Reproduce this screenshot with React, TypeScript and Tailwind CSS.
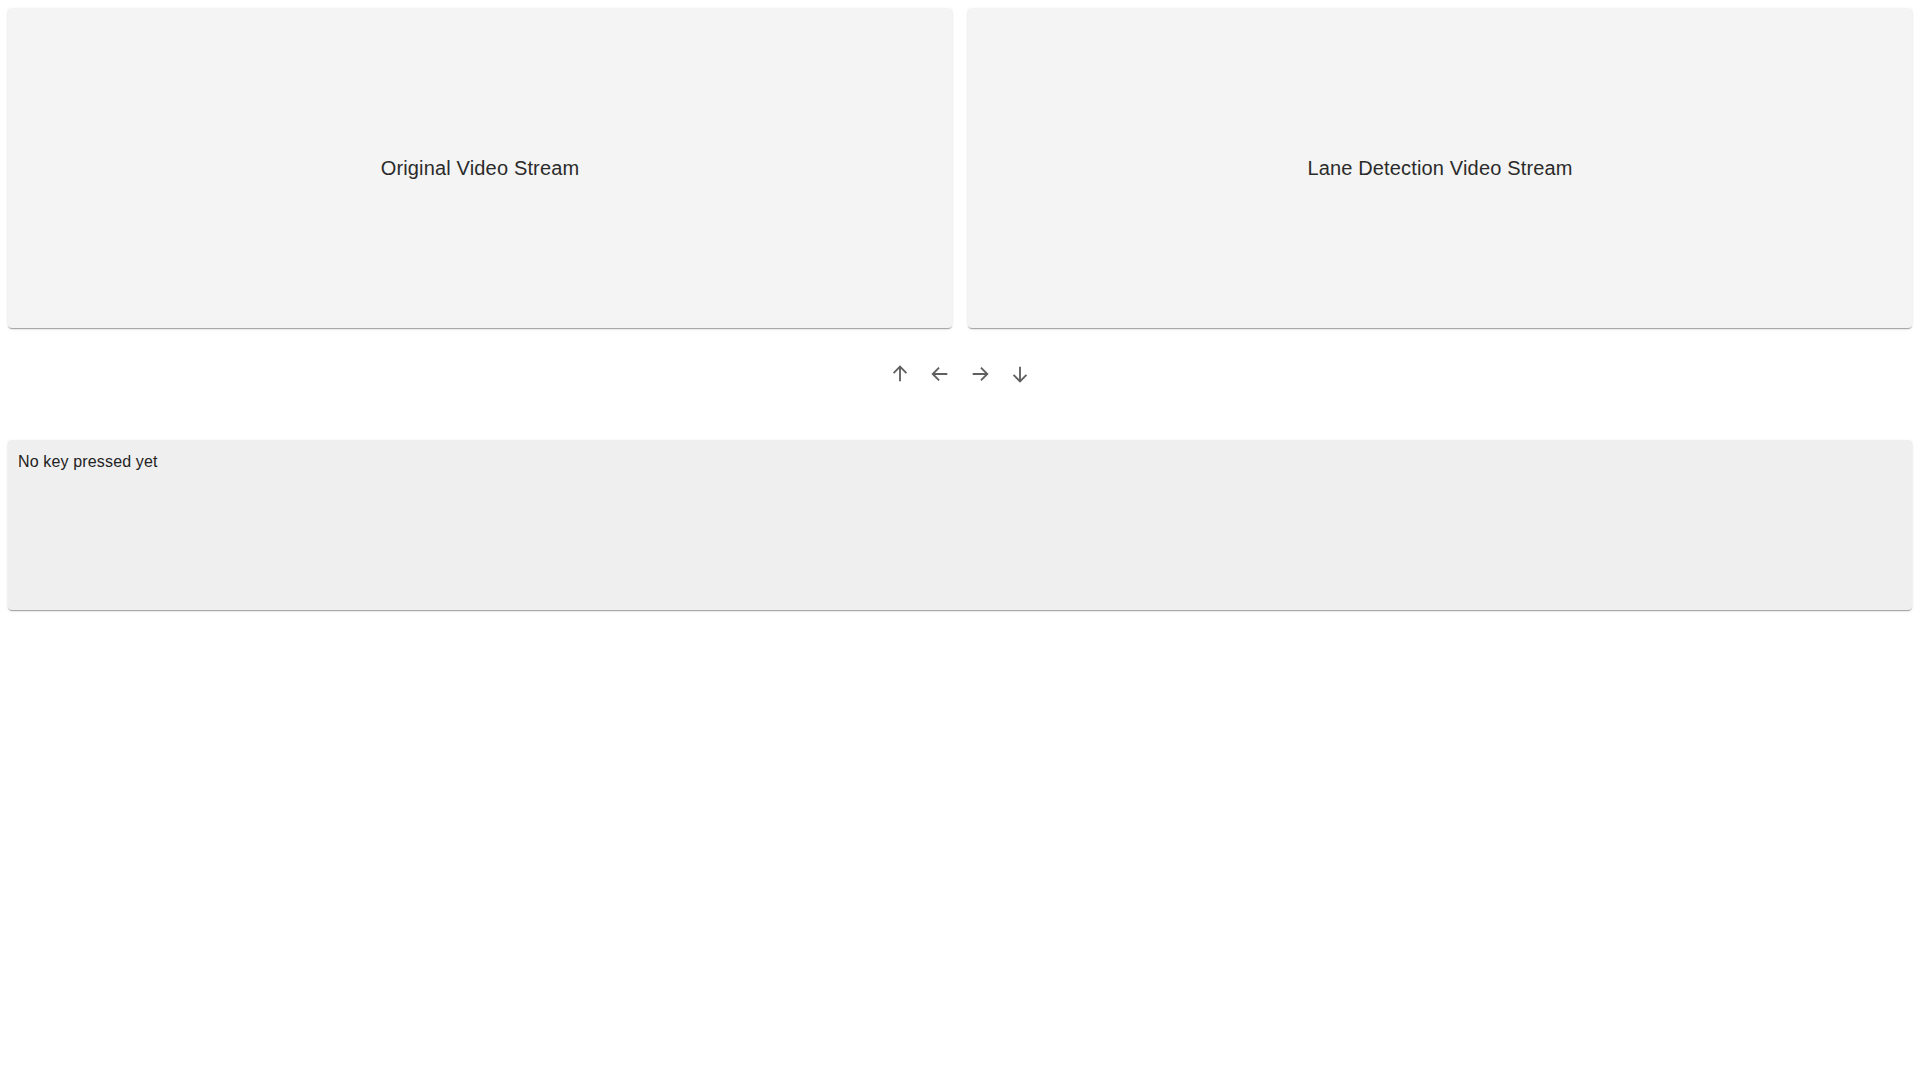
const ARROWS = [
  { label: "Up", d: "M12 20V4M5 11l7-7 7 7" },
  { label: "Left", d: "M20 12H4M11 5l-7 7 7 7" },
  { label: "Right", d: "M4 12h16M13 5l7 7-7 7" },
  { label: "Down", d: "M12 4v16M5 13l7 7 7-7" },
];

const paperShadow =
  "shadow-[0px_2px_1px_-1px_rgba(0,0,0,0.2),0px_1px_1px_0px_rgba(0,0,0,0.14),0px_1px_3px_0px_rgba(0,0,0,0.12)]";

function StreamPanel({ title }: { title: string }) {
  return (
    <div
      className={`flex h-[320px] items-center justify-center rounded bg-[#f4f4f4] ${paperShadow}`}
    >
      <span className="text-[20px] tracking-[0.16px] text-[#2b2b2b]">{title}</span>
    </div>
  );
}

export default function App() {
  return (
    <div
      className="min-h-screen bg-white p-2"
      style={{ fontFamily: '"Liberation Sans", Arial, sans-serif' }}
    >
      {/* Video streams */}
      <div className="grid grid-cols-2 gap-4">
        <StreamPanel title="Original Video Stream" />
        <StreamPanel title="Lane Detection Video Stream" />
      </div>

      {/* Direction controls */}
      <div className="mt-[26px] flex items-center justify-center">
        {ARROWS.map((a) => (
          <button
            key={a.label}
            type="button"
            aria-label={a.label}
            className="flex h-10 w-10 items-center justify-center rounded-full text-[#5f5f5f] hover:bg-black/5"
          >
            <svg
              width="22"
              height="22"
              viewBox="0 0 24 24"
              fill="none"
              stroke="currentColor"
              strokeWidth="2"
              aria-hidden="true"
            >
              <path d={a.d} />
            </svg>
          </button>
        ))}
      </div>

      {/* Key log */}
      <div
        className={`mt-[46px] h-[170px] rounded bg-[#efefef] p-[10px] text-base tracking-[0.15px] text-[#222] ${paperShadow}`}
      >
        No key pressed yet
      </div>
    </div>
  );
}
